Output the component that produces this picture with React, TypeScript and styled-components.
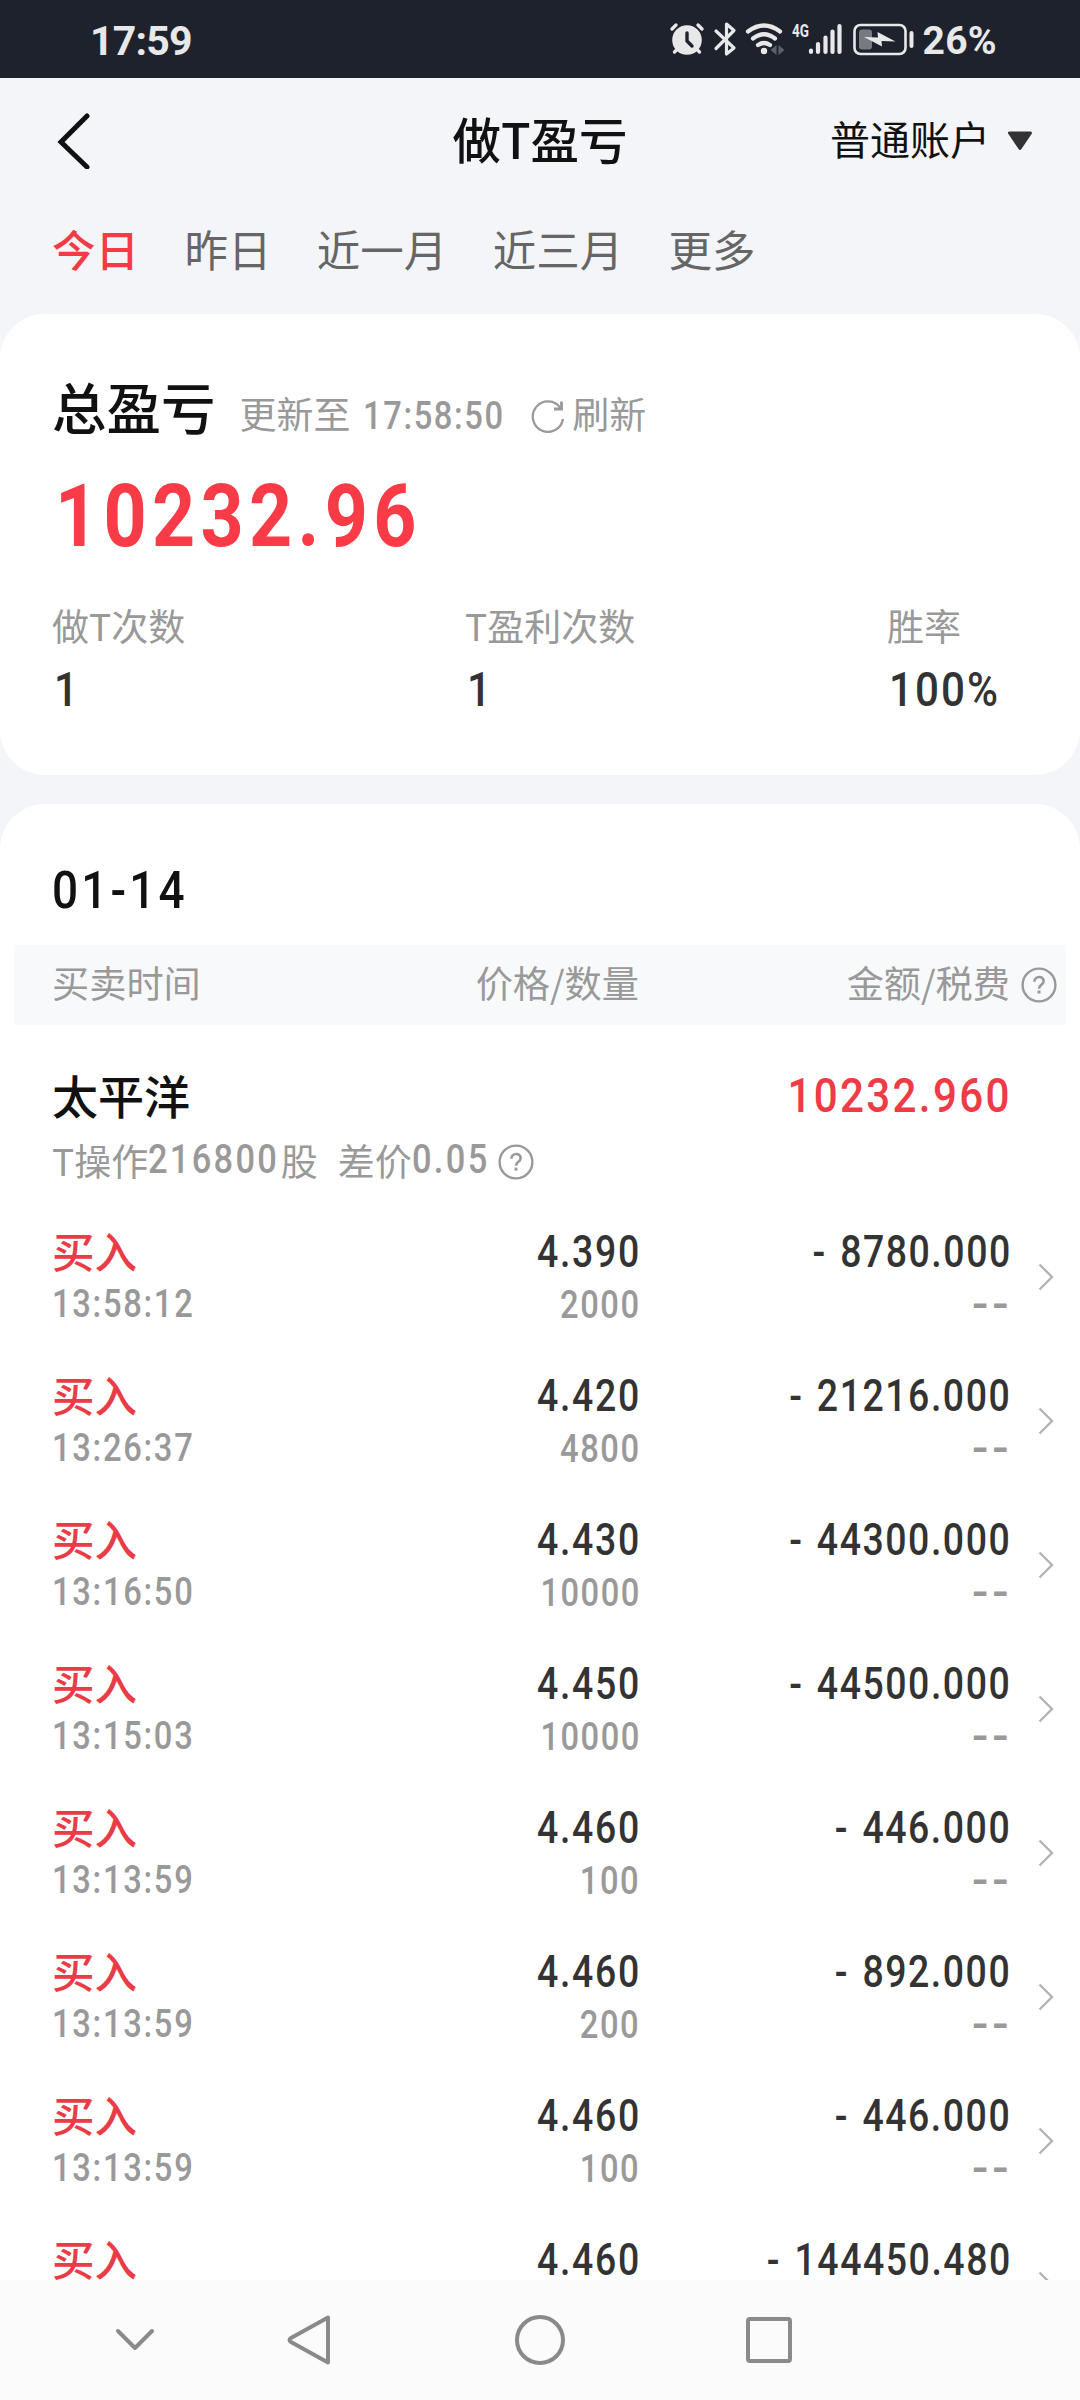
import React from "react";
import styled, { createGlobalStyle } from "styled-components";

const CJK = `"Noto Sans CJK SC", sans-serif`;
const NUM = `Roboto, "Noto Sans CJK SC", sans-serif`;

const GlobalStyle = createGlobalStyle`
  * { box-sizing: border-box; }
  body { margin: 0; background: #f4f5f9; font-family: ${CJK}; }
`;

const Screen = styled.div`
  width: 1080px;
  height: 2400px;
  display: flex;
  flex-direction: column;
  overflow: hidden;
  background: #f4f5f9;
`;

const StatusBar = styled.div`
  flex: none;
  height: 78px;
  padding: 0 83px 0 90px;
  display: flex;
  align-items: center;
  justify-content: space-between;
  background: #1e222d;
  color: #e8e8e8;
`;

const StatusText = styled.span<{ $size: number; $ls?: number }>`
  font: 700 ${(p) => p.$size}px/1 ${NUM};
  letter-spacing: ${(p) => p.$ls ?? 0}px;
  padding-top: 4px;
`;

const StatusIcons = styled.div`
  display: flex;
  align-items: center;
  gap: 2px;
`;

const Header = styled.header`
  flex: none;
  height: 124px;
  padding: 0 47px 0 57px;
  display: grid;
  grid-template-columns: 1fr auto 1fr;
  align-items: center;
`;

const Title = styled.h1`
  margin: 0 10px 5px 0;
  font-size: 48.5px;
  font-weight: 500;
  line-height: 60px;
  color: #111;
`;

const Account = styled.div`
  justify-self: end;
  display: flex;
  align-items: center;
  gap: 17px;
  padding-bottom: 4px;
  font-size: 40px;
  line-height: 60px;
  color: #111;
  svg { margin-top: 6px; }
`;

const Tabs = styled.nav`
  flex: none;
  height: 112px;
  padding: 17px 52px 0;
  display: flex;
  gap: 45.4px;
`;

const Tab = styled.span<{ $active?: boolean }>`
  font-size: 43.5px;
  line-height: 60px;
  font-weight: ${(p) => (p.$active ? 500 : 400)};
  color: ${(p) => (p.$active ? "#f33b46" : "#666")};
`;

const SummaryCard = styled.section`
  flex: none;
  height: 461px;
  padding: 52px 52px 0;
  background: #fff;
  border-radius: 45px;
`;

const DayCard = styled.section`
  flex: 1 1 0;
  min-height: 0;
  margin-top: 29px;
  overflow: hidden;
  background: #fff;
  border-radius: 45px 45px 0 0;
`;

const SummaryHead = styled.div`
  display: flex;
  align-items: baseline;
  height: 80px;
  line-height: 80px;
  color: #999;
  font-size: 37px;
`;

const SummaryTitle = styled.span`
  font-size: 54.5px;
  font-weight: 500;
  color: #111;
  margin-right: 24px;
`;

const UpdatedTo = styled.span`
  padding-top: 1px;
  margin-right: 12px;
`;

const Refresh = styled.span`
  display: flex;
  align-items: baseline;
  gap: 7px;
  margin-left: 27px;
  svg { position: relative; top: 4px; }
`;

interface NumProps {
  $size: number;
  $weight?: number;
  $color?: string;
  $spacing?: number;
  $line?: number;
  $narrow?: number;
  $end?: boolean;
  $trim?: number;
}

/* Figures are condensed towards their anchored edge. */
const Num = styled.span<NumProps>`
  display: inline-block;
  font-family: ${NUM};
  font-size: ${(p) => p.$size}px;
  font-weight: ${(p) => p.$weight ?? 500};
  color: ${(p) => p.$color ?? "#333"};
  letter-spacing: ${(p) => p.$spacing ?? 2}px;
  word-spacing: 3px;
  line-height: ${(p) => (p.$line ? `${p.$line}px` : "inherit")};
  white-space: pre;
  transform: scaleX(${(p) => p.$narrow ?? 0.86});
  transform-origin: ${(p) => (p.$end ? "right" : "left")} center;
  margin-right: ${(p) => p.$trim ?? (p.$end ? -1.5 : 0)}px;
`;

const Total = styled.div`
  height: 130px;
  padding: 14px 0 0 3px;
`;

const Stats = styled.div`
  display: grid;
  grid-template-columns: 413px 422px 1fr;
  padding-top: 18px;
`;

const Stat = styled.div`
  display: flex;
  flex-direction: column;
  align-items: flex-start;
  line-height: 62px;
`;

const Label = styled.span`
  font-size: 37px;
  color: #999;
  margin-bottom: 3px;
`;

const StatValue = styled(Num)`
  margin-left: 1.5px;
`;

const DayTitle = styled.div`
  height: 141px;
  padding: 52px 52px 0;
  line-height: 70px;
`;

const TableHead = styled.div`
  height: 80px;
  margin: 0 14px;
  padding: 0 9px 0 38px;
  display: grid;
  grid-template-columns: 300px 287px 371px 1fr;
  align-items: center;
  background: #f8f9fb;
  font-size: 37.2px;
  line-height: 74px;
  color: #999;
  svg { justify-self: end; }
`;

const HeadCell = styled.span<{ $end?: boolean }>`
  text-align: ${(p) => (p.$end ? "right" : "left")};
  padding-bottom: 6px;
`;

const Stock = styled.div`
  height: 192px;
  padding: 36px 70px 0 52px;
`;

const StockTop = styled.div`
  display: flex;
  justify-content: space-between;
  line-height: 66px;
`;

const StockName = styled.span`
  font-size: 46px;
  font-weight: 500;
  color: #111;
`;

const StockTotal = styled(Num)`
  padding-top: 2px;
`;

const StockInfo = styled.div`
  display: flex;
  align-items: center;
  height: 62px;
  font-size: 37px;
  line-height: 60px;
  color: #999;
  white-space: pre;
  svg { margin: 3px 0 0 8px; }
`;

const Spread = styled.span`
  margin-left: 20px;
`;

const Row = styled.div`
  height: 144px;
  padding: 15px 26px 0 52px;
  display: grid;
  grid-template-columns: 300px 287px 371px 1fr;
`;

const Cell = styled.div<{ $end?: boolean }>`
  display: flex;
  flex-direction: column;
  gap: 7px;
  align-items: ${(p) => (p.$end ? "flex-end" : "flex-start")};
`;

const Side = styled.span`
  margin: -2px 0 2px;
  font-size: 42.5px;
  font-weight: 500;
  line-height: 40px;
  color: #e93c46;
`;

const Go = styled.div`
  justify-self: end;
  padding-top: 31px;
`;

const NavBar = styled.div`
  flex: none;
  height: 120px;
  padding-left: 114px;
  display: grid;
  grid-template-columns: 171px 230px 231px auto;
  align-items: center;
  background: #fbfbfb;
`;

const Help = () => (
  <svg width="36" height="36" viewBox="0 0 36 36" fill="none" stroke="#999" strokeWidth="2.4">
    <circle cx="18" cy="18" r="16.4" />
    <path d="M13.400 14.800c0-6.400 9.400-6 9.200-.6-.1 3.600-4.600 3.600-4.600 7.600" strokeWidth="2.600" />
    <path d="M18 23.600v3" strokeWidth="3" />
  </svg>
);

const rows = [
  ["13:58:12", "4.390", "2000", "8780.000"],
  ["13:26:37", "4.420", "4800", "21216.000"],
  ["13:16:50", "4.430", "10000", "44300.000"],
  ["13:15:03", "4.450", "10000", "44500.000"],
  ["13:13:59", "4.460", "100", "446.000"],
  ["13:13:59", "4.460", "200", "892.000"],
  ["13:13:59", "4.460", "100", "446.000"],
  ["", "4.460", "", "144450.480"],
];

export default function App() {
  return (
    <Screen>
      <GlobalStyle />
      <StatusBar>
        <StatusText $size={41} $ls={-0.8}>17:59</StatusText>
        <StatusIcons>
          <svg width="252" height="40" viewBox="669 19 252 40" fill="none" stroke="#e8e8e8" strokeLinecap="round" strokeLinejoin="round">
            <circle cx="687" cy="40" r="14.8" fill="#e8e8e8" stroke="none" />
            <path d="M687 33v8l5 5" stroke="#1e222d" strokeWidth="3.400" />
            <path d="M672 29l4-4M702 29l-4-4M674.500 52l3-3M699.500 52l-3-3" strokeWidth="3.400" />
            <path d="M716 31l18 17-7.500 6V24l7.500 6.500-18 18" strokeWidth="3.200" />
            <path d="M748 31.500q16-12 32 0M753 38.500q11-8.500 22 0M758 45q6-4 12 0" strokeWidth="4.200" />
            <circle cx="764" cy="51" r="3.200" fill="#e8e8e8" stroke="none" />
            <path d="M776.500 45v10l-6-5zM778.500 45v10l6-5z" fill="#5c606a" stroke="none" />
            <path d="M811 50.500v1.500M818 44v8M825.500 37.500v14.500M832.500 31.500v20.500M839.500 26v26" strokeWidth="4.200" />
            <rect x="854.500" y="25" width="51" height="29" rx="6" strokeWidth="2.600" />
            <rect x="859" y="29.500" width="13" height="20" rx="3" fill="#777a81" stroke="none" />
            <path d="M864 37l14 .5-.5-5.500 18 9.500-14-.5.5 5.500z" fill="#e8e8e8" stroke="none" />
            <path d="M911.500 33v13" strokeWidth="4" />
            <text x="792" y="37" fontFamily="Roboto, sans-serif" fontSize="18" fontWeight="700" textLength="17" lengthAdjust="spacingAndGlyphs" fill="#e8e8e8" stroke="none">4G</text>
          </svg>
          <StatusText $size={39} $ls={0.3}>26%</StatusText>
        </StatusIcons>
      </StatusBar>
      <Header>
        <svg width="34" height="58" viewBox="0 -2 34 58" fill="none" stroke="#111" strokeWidth="5" strokeLinecap="round">
          <path d="M30 3L4 29l26 25" />
        </svg>
        <Title>做T盈亏</Title>
        <Account>
          普通账户
          <svg width="26" height="20" viewBox="0 0 26 20">
            <path d="M2.500 2h21L13 17.500z" fill="#333" stroke="#333" strokeWidth="3" strokeLinejoin="round" />
          </svg>
        </Account>
      </Header>
      <Tabs>
        <Tab $active>今日</Tab>
        <Tab>昨日</Tab>
        <Tab>近一月</Tab>
        <Tab>近三月</Tab>
        <Tab>更多</Tab>
      </Tabs>
      <SummaryCard>
        <SummaryHead>
          <SummaryTitle>总盈亏</SummaryTitle>
          <UpdatedTo>更新至</UpdatedTo>
          <Num $size={38} $color="#999" $spacing={1.9} $trim={-23}>17:58:50</Num>
          <Refresh>
            <svg width="34" height="34" viewBox="0 0 34 34" fill="none" stroke="#999" strokeWidth="2.300">
              <path d="M32 20A15.200 15.200 0 1 1 29.500 9" />
              <path d="M30.500 2.500v7.500H23" strokeWidth="2.800" />
            </svg>
            刷新
          </Refresh>
        </SummaryHead>
        <Total>
          <Num $size={87.500} $weight={700} $color="#f83b46" $spacing={6.2} $line={112}>10232.96</Num>
        </Total>
        <Stats>
          <Stat><Label>做T次数</Label><StatValue $size={49}>1</StatValue></Stat>
          <Stat><Label>T盈利次数</Label><StatValue $size={49}>1</StatValue></Stat>
          <Stat><Label>胜率</Label><StatValue $size={49} $spacing={2.4}>100%</StatValue></Stat>
        </Stats>
      </SummaryCard>
      <DayCard>
        <DayTitle><Num $size={51} $color="#111" $narrow={0.9} $spacing={3.5}>01-14</Num></DayTitle>
        <TableHead>
          <HeadCell>买卖时间</HeadCell>
          <HeadCell $end>价格/数量</HeadCell>
          <HeadCell $end>金额/税费</HeadCell>
          <Help />
        </TableHead>
        <Stock>
          <StockTop>
            <StockName>太平洋</StockName>
            <StockTotal $size={49} $color="#ee3b46" $spacing={2.7} $end>10232.960</StockTotal>
          </StockTop>
          <StockInfo>
            T操作<Num $size={40} $color="#999" $spacing={2.7} $trim={-20}>216800</Num>股
            <Spread>差价</Spread><Num $size={40} $color="#999" $spacing={2.7} $trim={-11.500}>0.05</Num>
            <Help />
          </StockInfo>
        </Stock>
        {rows.map(([time, price, qty, amount], i) => (
          <Row key={i}>
            <Cell>
              <Side>买入</Side>
              {time && <Num $size={38} $color="#999" $spacing={2} $line={50}>{time}</Num>}
            </Cell>
            <Cell $end>
              <Num $size={43.5} $spacing={2} $line={41} $end>{price}</Num>
              {qty && <Num $size={38} $color="#999" $spacing={1.8} $line={50} $end>{qty}</Num>}
            </Cell>
            <Cell $end>
              <Num $size={43.5} $spacing={1.8} $line={41} $end>{`- ${amount}`}</Num>
              {qty && <Num $size={48} $color="#999" $spacing={4} $narrow={1} $line={47} $trim={-2.500} $end>--</Num>}
            </Cell>
            <Go>
              <svg width="16" height="28" viewBox="0 0 16 28" fill="none" stroke="#b3b3b3" strokeWidth="2.400">
                <path d="M1.500 1.500L14 14 1.500 26.500" />
              </svg>
            </Go>
          </Row>
        ))}
      </DayCard>
      <NavBar>
        <svg width="42" height="26" viewBox="0 0 42 26" fill="none" stroke="#8a8a8a" strokeWidth="4" strokeLinecap="round" strokeLinejoin="round">
          <path d="M4 4l17 17L38 4" />
        </svg>
        <svg width="46" height="52" viewBox="0 0 46 52" fill="none" stroke="#8a8a8a" strokeWidth="4" strokeLinejoin="round">
          <path d="M43 3.500v45L6 28q-3-2 0-4z" />
        </svg>
        <svg width="50" height="50" viewBox="0 0 50 50" fill="none" stroke="#8a8a8a" strokeWidth="4">
          <circle cx="25" cy="25" r="23" />
        </svg>
        <svg width="46" height="46" viewBox="0 0 46 46" fill="none" stroke="#8a8a8a" strokeWidth="4">
          <rect x="2" y="2" width="42" height="42" rx="2" />
        </svg>
      </NavBar>
    </Screen>
  );
}
